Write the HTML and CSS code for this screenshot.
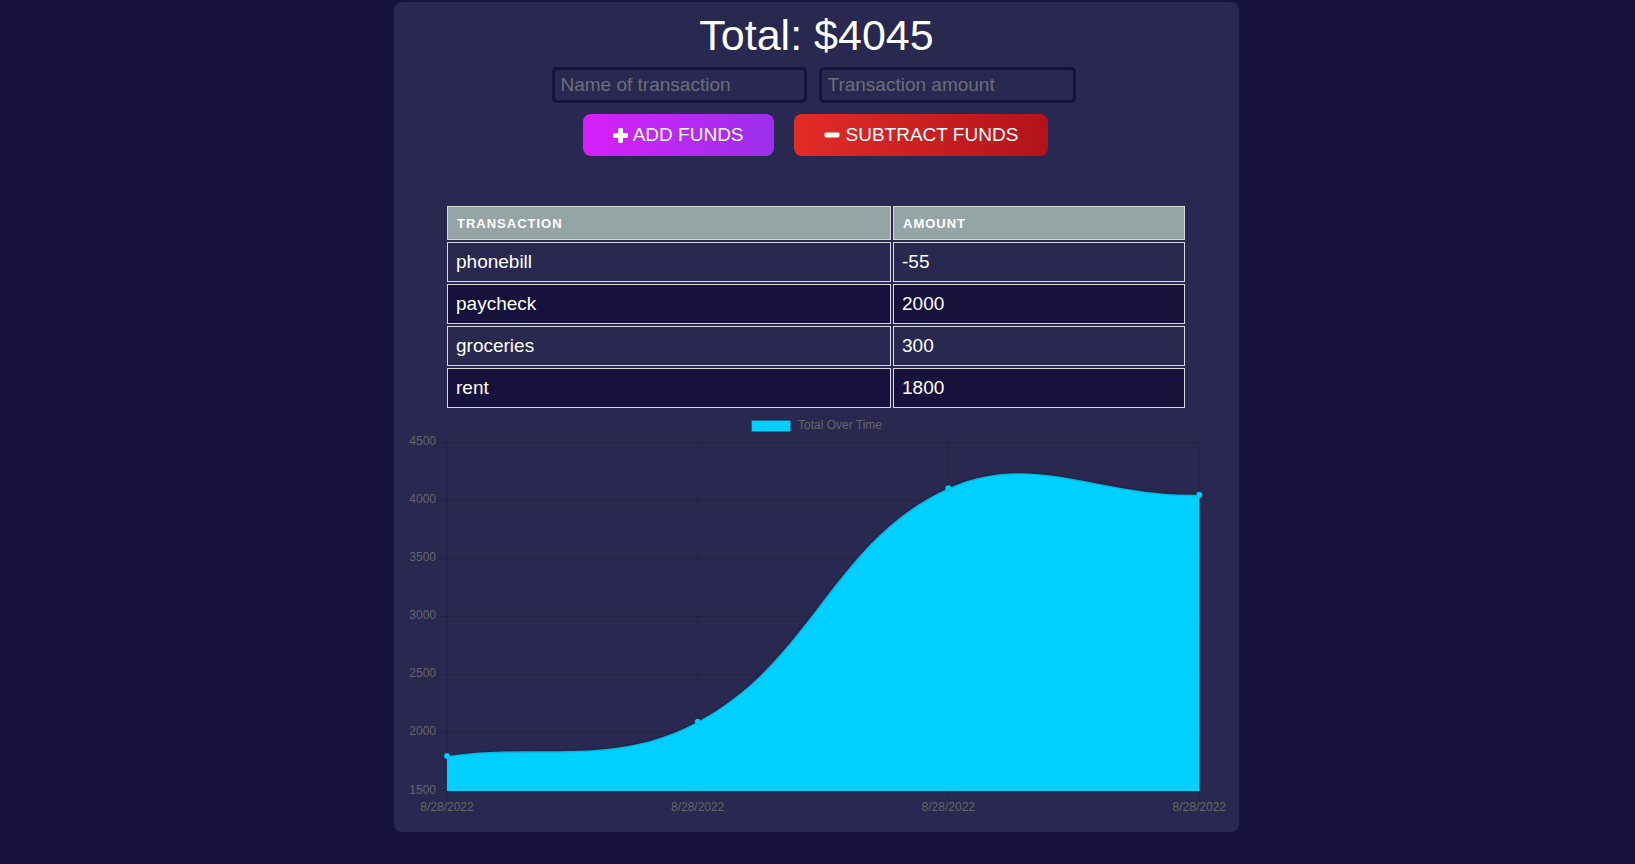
FILE: index.html
```html
<!DOCTYPE html>
<html lang="en">
<head>
<meta charset="utf-8">
<title>Budget Tracker</title>
<link rel="stylesheet" href="styles.css">
</head>
<body>
<div class="wrapper">
  <div class="total">Total: $<span class="total-amount">4045</span></div>
  <div class="form">
    <input class="field" type="text" placeholder="Name of transaction">
    <input class="field" type="text" placeholder="Transaction amount">
  </div>
  <div class="actions">
    <button class="btn btn-add">
      <svg class="icon" width="15" height="15" viewBox="0 0 15 15"><rect x="5" y="0" width="5" height="15" rx="1.4" fill="#fff"/><rect x="0" y="5" width="15" height="5" rx="1.4" fill="#fff"/></svg>
      ADD FUNDS
    </button>
    <button class="btn btn-sub">
      <svg class="icon" width="16" height="6" viewBox="0 0 16 6"><rect x="0.5" y="0.5" width="15" height="5" rx="1.4" fill="#fff"/></svg>
      SUBTRACT FUNDS
    </button>
  </div>
  <table class="tx-table">
    <thead>
      <tr><th class="col-name">Transaction</th><th>Amount</th></tr>
    </thead>
    <tbody>
      <tr><td>phonebill</td><td>-55</td></tr>
      <tr><td>paycheck</td><td>2000</td></tr>
      <tr><td>groceries</td><td>300</td></tr>
      <tr><td>rent</td><td>1800</td></tr>
    </tbody>
  </table>
  <svg class="chart" width="845" height="422" viewBox="394 410 845 422">
    <g class="grid">
      <line x1="437" y1="442.5" x2="1199.5" y2="442.5"/>
      <line x1="437" y1="500.5" x2="1199.5" y2="500.5"/>
      <line x1="437" y1="558.5" x2="1199.5" y2="558.5"/>
      <line x1="437" y1="616.5" x2="1199.5" y2="616.5"/>
      <line x1="437" y1="674.5" x2="1199.5" y2="674.5"/>
      <line x1="437" y1="732.5" x2="1199.5" y2="732.5"/>
      <line x1="437" y1="790.5" x2="1199.5" y2="790.5"/>
      <line x1="447.5" y1="442" x2="447.5" y2="801"/>
      <line x1="697.5" y1="442" x2="697.5" y2="801"/>
      <line x1="948.5" y1="442" x2="948.5" y2="801"/>
      <line x1="1199.5" y1="442" x2="1199.5" y2="801"/>
    </g>
    <g class="ticks-y">
      <text x="436" y="445">4500</text>
      <text x="436" y="503">4000</text>
      <text x="436" y="561">3500</text>
      <text x="436" y="619">3000</text>
      <text x="436" y="677">2500</text>
      <text x="436" y="735">2000</text>
      <text x="436" y="794">1500</text>
    </g>
    <g class="ticks-x">
      <text x="447" y="811">8/28/2022</text>
      <text x="697.7" y="811">8/28/2022</text>
      <text x="948.3" y="811">8/28/2022</text>
      <text x="1199.3" y="811">8/28/2022</text>
    </g>
    <g class="legend">
      <rect x="751.5" y="420.5" width="39" height="11"/>
      <text x="798" y="429">Total Over Time</text>
    </g>
    <path class="area" d="M447,756 C547.3,742.3 612.5,767.2 697.7,721.7 C813,660.1 832.5,540.7 948.3,488.3 C1033.2,449.9 1098.9,497.3 1199.3,494.7 L1199.3,791 L447,791 Z"/>
    <path class="line" d="M447,756 C547.3,742.3 612.5,767.2 697.7,721.7 C813,660.1 832.5,540.7 948.3,488.3 C1033.2,449.9 1098.9,497.3 1199.3,494.7"/>
    <g class="points">
      <circle cx="447" cy="756" r="3"/>
      <circle cx="697.7" cy="721.7" r="3"/>
      <circle cx="948.3" cy="488.3" r="3"/>
      <circle cx="1199.3" cy="494.7" r="3"/>
    </g>
  </svg>
</div>
</body>
</html>
```

FILE: styles.css
```css
html, body {
  margin: 0;
}

body {
  background: #16123b;
  font-family: "Liberation Sans", Arial, Helvetica, sans-serif;
  padding: 2px 2px 0 0;
}

.wrapper {
  width: 845px;
  margin: 0 auto;
  background: #282850;
  border-radius: 8px;
  padding-top: 9px;
  display: flex;
  flex-direction: column;
  align-items: center;
}

.total {
  font-size: 43px;
  line-height: 48px;
  color: #fff;
}

.form {
  display: flex;
  gap: 12px;
  margin-top: 8px;
  padding-right: 6px;
}

.field {
  width: 255px;
  height: 36px;
  box-sizing: border-box;
  border: 3px solid #16123b;
  border-radius: 5px;
  background: transparent;
  color: #fff;
  font-family: "Liberation Sans", Arial, sans-serif;
  font-size: 19px;
  padding: 0 6px;
  outline: none;
}

.field + .field {
  width: 257px;
}

.field::placeholder {
  color: #6e6e78;
}

.actions {
  display: flex;
  gap: 20px;
  margin-top: 11px;
  padding-right: 2px;
}

.btn {
  height: 42px;
  padding: 0 30px;
  border: none;
  border-radius: 8px;
  color: #fff;
  font-family: "Liberation Sans", Arial, sans-serif;
  font-size: 19px;
  display: flex;
  align-items: center;
  gap: 5px;
  cursor: pointer;
}

.btn-add {
  background: linear-gradient(90deg, #d820fa 0%, #9a30ea 100%);
}

.btn-sub {
  gap: 6px;
  background: linear-gradient(90deg, #e32c27 0%, #b2131a 100%);
}

.icon {
  display: block;
  flex: none;
}

.tx-table {
  margin-top: 48px;
  margin-right: 1px;
  width: 742px;
  border-spacing: 2px;
  table-layout: fixed;
  color: #fff;
}

.tx-table th {
  background: #95a5a6;
  border: 1px solid #d8d8d8;
  height: 32px;
  padding: 0 9px;
  text-align: left;
  text-transform: uppercase;
  font-size: 13px;
  font-weight: bold;
  letter-spacing: 1px;
}

.tx-table th.col-name {
  width: 424px;
}

.tx-table td {
  border: 1px solid #d8d8d8;
  height: 38px;
  padding: 0 8px;
  font-size: 19px;
}

.tx-table tbody tr:nth-child(odd) td {
  background: #282850;
}

.tx-table tbody tr:nth-child(even) td {
  background: #16123b;
}

.chart {
  display: block;
}

.chart .grid line {
  stroke: rgba(0, 0, 0, 0.12);
  stroke-width: 1;
}

.chart text {
  font-family: "Liberation Sans", Arial, sans-serif;
  font-size: 12px;
  fill: #666;
}

.chart .ticks-y text {
  text-anchor: end;
}

.chart .ticks-x text {
  text-anchor: middle;
}

.chart .legend rect {
  fill: #00d0ff;
  stroke: rgba(0, 0, 0, 0.1);
  stroke-width: 1;
}

.chart .area {
  fill: #00d0ff;
}

.chart .line {
  fill: none;
  stroke: rgba(0, 0, 0, 0.1);
  stroke-width: 3;
}

.chart .points circle {
  fill: #00d0ff;
  stroke: rgba(0, 0, 0, 0.1);
  stroke-width: 1;
}
```
